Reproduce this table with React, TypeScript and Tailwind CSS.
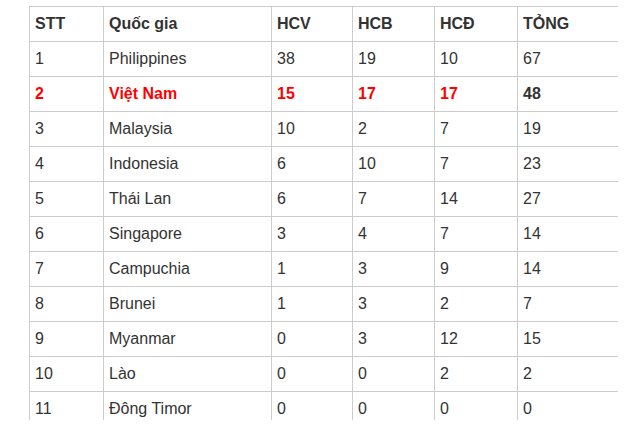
const rows = [
  ['1', 'Philippines', '38', '19', '10', '67'],
  ['2', 'Việt Nam', '15', '17', '17', '48'],
  ['3', 'Malaysia', '10', '2', '7', '19'],
  ['4', 'Indonesia', '6', '10', '7', '23'],
  ['5', 'Thái Lan', '6', '7', '14', '27'],
  ['6', 'Singapore', '3', '4', '7', '14'],
  ['7', 'Campuchia', '1', '3', '9', '14'],
  ['8', 'Brunei', '1', '3', '2', '7'],
  ['9', 'Myanmar', '0', '3', '12', '15'],
  ['10', 'Lào', '0', '0', '2', '2'],
  ['11', 'Đông Timor', '0', '0', '0', '0'],
];

const headers = ['STT', 'Quốc gia', 'HCV', 'HCB', 'HCĐ', 'TỎNG'];
const widths = ['w-[74px]', 'w-[168px]', 'w-[81px]', 'w-[82px]', 'w-[83px]', 'w-[100px]'];

export default function App() {
  return (
    <div className="w-[642px] h-[428px] bg-white font-['Liberation_Sans',Arial,sans-serif] text-[16px] text-[#333]">
      <div className="pl-[29px] pt-[6px]">
        <div className="h-[414px] overflow-hidden">
          <table className="border-collapse table-fixed w-[588px]">
            <thead>
              <tr className="h-[35px]">
                {headers.map((h, i) => (
                  <th
                    key={h}
                    className={`${widths[i]} border-t border-l border-[#ccc] text-left font-bold pl-[5px] align-middle`}
                  >
                    {h}
                  </th>
                ))}
              </tr>
            </thead>
            <tbody>
              {rows.map((r) => {
                const hl = r[0] === '2';
                return (
                  <tr key={r[0]} className="h-[35px]">
                    {r.map((c, i) => (
                      <td
                        key={i}
                        className={`border-t border-l border-[#ccc] pl-[5px] align-middle ${
                          hl ? (i === 5 ? 'font-bold text-[#333]' : 'font-bold text-[#ff0000]') : ''
                        }`}
                      >
                        {c}
                      </td>
                    ))}
                  </tr>
                );
              })}
            </tbody>
          </table>
        </div>
      </div>
    </div>
  );
}
